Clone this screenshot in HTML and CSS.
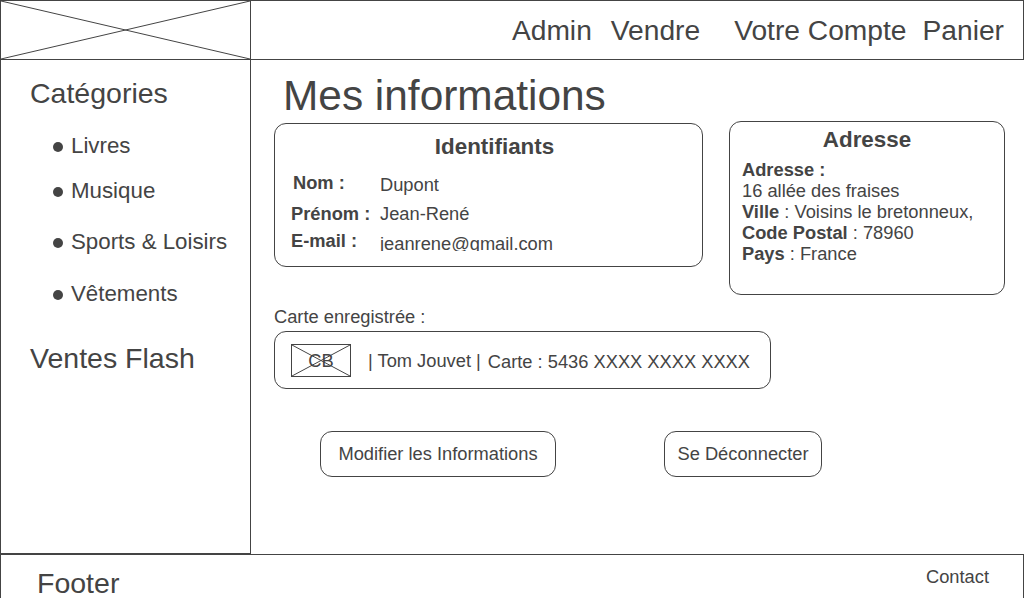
FILE: index.html
```html
<!DOCTYPE html>
<html lang="fr">
<head>
<meta charset="utf-8">
<title>Mes informations</title>
<link rel="stylesheet" href="styles.css">
</head>
<body>
<div class="page">
  <header class="topbar">
    <div class="logo">
      <svg class="xbox" viewBox="0 0 249 58" preserveAspectRatio="none">
        <line x1="0" y1="0" x2="249" y2="58"/>
        <line x1="0" y1="58" x2="249" y2="0"/>
      </svg>
    </div>
    <nav class="nav">
      <a class="nav-admin">Admin</a>
      <a class="nav-vendre">Vendre</a>
      <a class="nav-compte">Votre Compte</a>
      <a class="nav-panier">Panier</a>
    </nav>
  </header>
  <div class="middle">
    <aside class="sidebar">
      <h2 class="side-title">Catégories</h2>
      <ul class="cats">
        <li><span class="dot"></span>Livres</li>
        <li><span class="dot"></span>Musique</li>
        <li><span class="dot"></span>Sports &amp; Loisirs</li>
        <li><span class="dot"></span>Vêtements</li>
      </ul>
      <h2 class="side-title flash">Ventes Flash</h2>
    </aside>
    <main class="main">
      <h1 class="title">Mes informations</h1>
      <div class="boxes">
        <section class="box ident">
          <h3 class="box-title">Identifiants</h3>
          <div class="fields">
            <span class="lbl lbl-nom">Nom :</span><span class="val val-nom">Dupont</span>
            <span class="lbl">Prénom :</span><span class="val">Jean-René</span>
            <span class="lbl lbl-mail">E-mail :</span><span class="val">jeanrene@gmail.com</span>
          </div>
        </section>
        <section class="box addr">
          <h3 class="box-title addr-title">Adresse</h3>
          <div class="addr-lines">
            <div><b>Adresse :</b></div>
            <div>16 allée des fraises</div>
            <div><b>Ville</b> : Voisins le bretonneux,</div>
            <div><b>Code Postal</b> : 78960</div>
            <div><b>Pays</b> : France</div>
          </div>
        </section>
      </div>
      <div class="card-label">Carte enregistrée :</div>
      <div class="box card">
        <div class="cb">
          <svg class="cb-x" viewBox="0 0 58 31" preserveAspectRatio="none">
            <line x1="0" y1="0" x2="58" y2="31"/>
            <line x1="0" y1="31" x2="58" y2="0"/>
          </svg>
          <span class="cb-text">CB</span>
        </div>
        <span class="owner">| Tom Jouvet |</span>
        <span class="cardnum">Carte : 5436 XXXX XXXX XXXX</span>
      </div>
      <div class="actions">
        <button class="btn btn-modify">Modifier les Informations</button>
        <button class="btn btn-logout">Se Déconnecter</button>
      </div>
    </main>
  </div>
  <footer class="footer">
    <span class="footer-title">Footer</span>
    <a class="contact">Contact</a>
  </footer>
</div>
</body>
</html>
```

FILE: styles.css
```css
* { box-sizing: border-box; }
html, body { margin: 0; padding: 0; }
body {
  font-family: "Liberation Sans", Arial, sans-serif;
  color: #444;
  background: #fff;
}
.page {
  width: 1024px;
  height: 598px;
  overflow: hidden;
  display: flex;
  flex-direction: column;
}
/* header */
.topbar {
  height: 60px;
  flex: none;
  display: flex;
  border: 1px solid #444;
}
.logo {
  width: 250px;
  border-right: 1px solid #444;
  flex: none;
}
.xbox { display: block; width: 100%; height: 100%; }
.xbox line, .cb-x line { stroke: #444; stroke-width: 1; }
.nav {
  margin-left: auto;
  display: flex;
  align-items: center;
  padding-right: 19px;
  padding-top: 0;
  font-size: 28.2px;
}
.nav a { line-height: 32px; }
.nav-admin { margin-right: 19px; }
.nav-vendre { margin-right: 34px; }
.nav-compte { margin-right: 16px; }

/* middle */
.middle {
  display: flex;
  height: 494px;
  flex: none;
}
.sidebar {
  width: 251px;
  flex: none;
  border-left: 1px solid #444;
  border-right: 1px solid #444;
  border-bottom: 1px solid #444;
  padding: 17px 0 0 29px;
}
.side-title {
  margin: 0;
  font-size: 28.5px;
  font-weight: normal;
  line-height: 32px;
}
.cats {
  list-style: none;
  margin: 24px 0 0;
  padding: 0 0 0 23px;
  font-size: 22.3px;
}
.cats li {
  line-height: 26px;
  display: flex;
  align-items: center;
}
.cats li:nth-child(2) { margin-top: 19px; }
.cats li:nth-child(3) { margin-top: 25px; }
.cats li:nth-child(4) { margin-top: 26px; }
.dot {
  width: 10px;
  height: 10px;
  border-radius: 50%;
  background: #444;
  margin-right: 8px;
  margin-top: 1px;
}
.flash { margin-top: 35px; }

.main {
  flex: 1;
  padding: 11px 0 0 23px;
}
.title {
  margin: 0 0 0 9px;
  font-size: 42.4px;
  font-weight: normal;
  line-height: 50px;
}
.boxes {
  display: flex;
  align-items: flex-start;
  gap: 26px;
}
.box {
  border: 1px solid #444;
  border-radius: 12px;
}
.ident {
  width: 429px;
  height: 144px;
  margin-top: 2px;
  padding: 10px 0 0 16px;
  overflow: hidden;
}
.box-title {
  margin: 0;
  text-align: center;
  font-size: 22.4px;
  line-height: 26px;
  font-weight: bold;
}
.ident .box-title { padding-right: 4px; }
.fields {
  margin-top: 9px;
  height: 82px;
  overflow: hidden;
  display: grid;
  grid-template-columns: 89px auto;
  grid-template-rows: 30px 30px 30px;
  font-size: 18.3px;
  line-height: 30px;
}
.lbl { font-weight: bold; }
.lbl-nom { padding-left: 2px; margin-top: -1px; }
.val-nom { padding-top: 1px; }
.lbl-mail { margin-top: -3px; }

.addr {
  width: 276px;
  height: 174px;
  padding: 5px 0 0 12px;
}
.addr-title { padding-right: 12px; }
.addr-lines {
  margin-top: 6px;
  font-size: 18.3px;
  line-height: 21px;
}

.card-label {
  margin-top: 11px;
  font-size: 18.3px;
  line-height: 22px;
}
.card {
  margin-top: 3px;
  width: 497px;
  height: 58px;
  display: flex;
  align-items: center;
  padding-left: 16px;
  font-size: 18.3px;
}
.cb {
  width: 60px;
  height: 33px;
  border: 1px solid #444;
  position: relative;
  display: flex;
  align-items: center;
  justify-content: center;
  margin-top: 1px;
  margin-right: 17px;
}
.cb-x {
  position: absolute;
  inset: 0;
  width: 100%;
  height: 100%;
}
.cb-text { font-size: 18.3px; margin-top: 1px; }
.owner { margin-right: 7px; margin-top: 2px; }
.cardnum { margin-top: 4px; }

.actions {
  display: flex;
  margin-top: 42px;
  padding-left: 46px;
  gap: 108px;
}
.btn {
  font-family: inherit;
  color: #444;
  background: #fff;
  border: 1px solid #444;
  border-radius: 12px;
  height: 46px;
  font-size: 18.3px;
  padding: 0;
  text-align: center;
}
.btn-modify { width: 236px; }
.btn-logout { width: 158px; }

.footer {
  flex: 1;
  border: 1px solid #444;
  border-bottom: none;
  display: flex;
  justify-content: space-between;
  align-items: flex-start;
  padding: 11px 34px 0 36px;
}
.footer-title {
  font-size: 28.5px;
  line-height: 32px;
  margin-top: 1px;
}
.contact {
  font-size: 18.3px;
  line-height: 22px;
}
```
